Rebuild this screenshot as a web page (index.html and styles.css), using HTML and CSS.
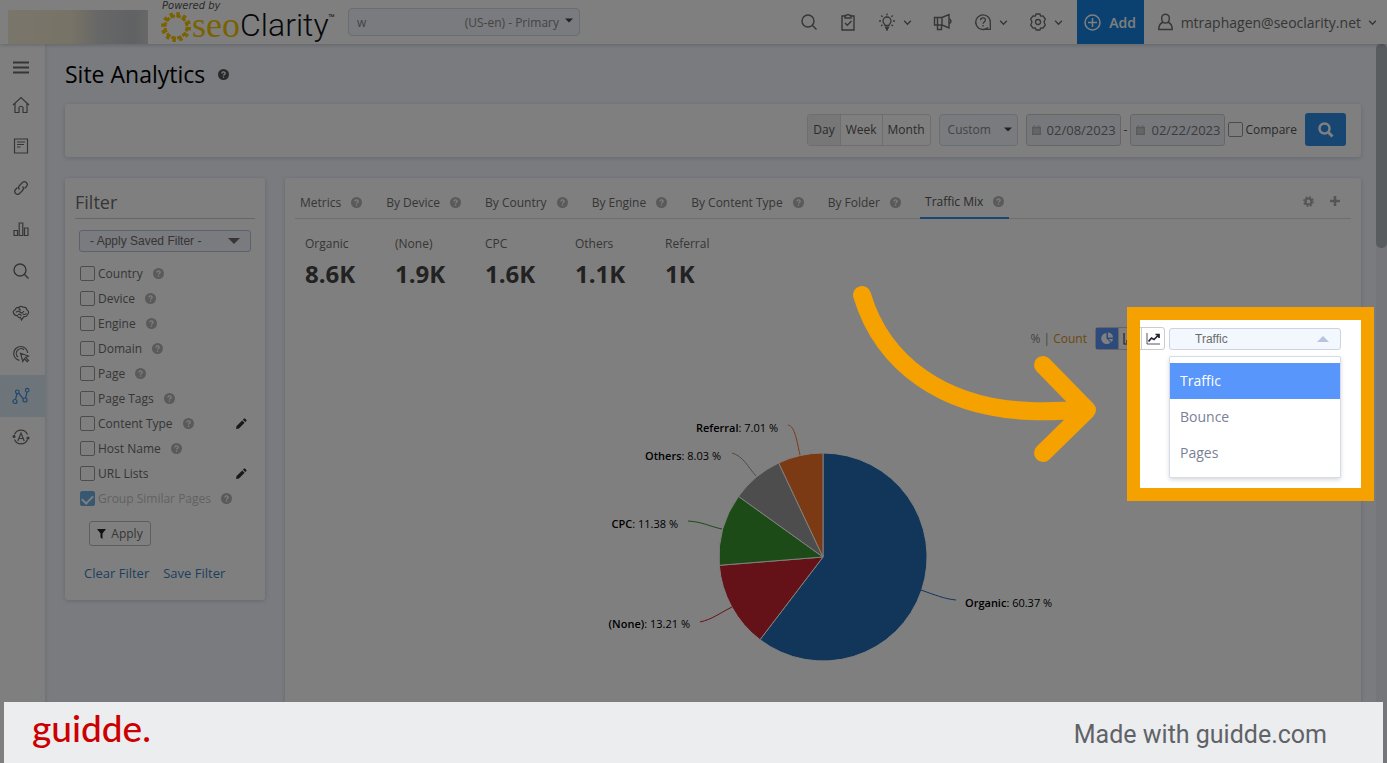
FILE: index.html
```html
<!DOCTYPE html>
<html lang="en">
<head>
  <meta charset="UTF-8" />
  <meta name="viewport" content="width=device-width, initial-scale=1.0" />
  <title>Site Analytics</title>
  <link rel="stylesheet" href="styles.css">
</head>
<body>
  <svg class="sprite" aria-hidden="true">
    <symbol id="help" viewBox="0 0 12 12">
      <circle cx="6" cy="6" r="6" fill="currentColor"/>
      <path d="M4.2 4.8C4.2 2.6 7.8 2.6 7.8 4.7C7.8 6 6 5.9 6 7.2M6 8.3V9.5" fill="none" stroke="#fff" stroke-width="1.4"/>
    </symbol>
    <symbol id="chev" viewBox="0 0 8 8"><path d="M1 2.5L4 5.5L7 2.5" fill="none" stroke="currentColor" stroke-width="1.2"/></symbol>
    <symbol id="caret" viewBox="0 0 12 6"><path d="M0 0H12L6 6Z" fill="currentColor"/></symbol>
    <symbol id="search" viewBox="0 0 18 18"><g fill="none" stroke="currentColor" stroke-width="1.4"><circle cx="8" cy="8" r="6"/><path d="M12.5 12.5L16.5 16.5"/></g></symbol>
    <symbol id="pencil" viewBox="0 0 12 12"><path d="M1 11L1.6 8L7.2 2.4L9.6 4.8L4 10.4ZM7.9 1.7L9 .6Q9.5.2 10 .6L11.4 2Q11.8 2.5 11.4 3L10.3 4.1Z" fill="currentColor"/></symbol>
    <symbol id="cal" viewBox="0 0 10 11"><path d="M0 2H2V0H3V2H7V0H8V2H10V11H0Z" fill="currentColor"/><path d="M1 4.5H9M1 6.5H9M1 8.5H9M3.5 4V10M6.5 4V10" stroke="#eef1f9" stroke-width=".5"/></symbol>
  </svg>

  <header class="topbar">
    <div class="client"></div>
    <a class="logo" href="#" aria-label="seoClarity">
      <span class="powered">Powered by</span>
      <span class="wordmark">
        <svg width="32" height="32" viewBox="0 0 32 32"><g fill="none" stroke="#f5c400"><circle cx="16" cy="16" r="11" stroke-dasharray="4.500 1.260" stroke-width="3"/><circle cx="16" cy="16" r="13.500" stroke-dasharray="3.500 3.570" stroke-width="3"/></g></svg>
        <span class="seo">seo</span><span class="clarity">Clarity</span><small>™</small>
      </span>
    </a>
    <div class="profile-select">
      <span>w</span>
      <select aria-label="Profile"><option>(US-en) - Primary</option></select>
      <svg width="8" height="5"><use href="#caret"/></svg>
    </div>
    <nav class="tools">
      <button aria-label="Search"><svg width="18" height="18"><use href="#search"/></svg></button>
      <button aria-label="Tasks"><svg width="18" height="18" viewBox="0 0 18 18"><g fill="none" stroke="currentColor" stroke-width="1.4"><path d="M6 3H3V17H15V3H12M6 5V2.5H7.5Q9 .2 10.5 2.5H12V5ZM6 10L8.3 12.3L12.5 8"/></g></svg></button>
      <button aria-label="Ideas"><svg width="18" height="18" viewBox="0 0 18 18"><g fill="none" stroke="currentColor" stroke-width="1.3"><path d="M7 12.5C7 11 5 10.500 5 8A4 4 0 0 1 13 8C13 10.500 11 11 11 12.500ZM9 .5V2.500M1 8H3M15 8H17M3.200 2.500L4.600 3.900M14.800 2.500L13.400 3.900M3 13L4.500 11.800M15 13L13.500 11.800"/><path d="M7 14.500H11M8 16.500H10" stroke-width="2"/></g></svg><svg class="chev"><use href="#chev"/></svg></button>
      <button aria-label="News"><svg width="20" height="18" viewBox="0 0 20 18"><path d="M1.500 4.500H9L16 1.500V15L9 12H1.500ZM9 4.500V12M4.500 12V16.500H8.500V12M16 5.500Q20 8.200 16 11M4.500 4.500V12" fill="none" stroke="currentColor" stroke-width="1.400"/></svg></button>
      <button aria-label="Help"><svg width="18" height="18" viewBox="0 0 18 18"><g fill="none" stroke="currentColor" stroke-width="1.300"><path d="M14 14.500A7.300 7.300 0 1 1 16.300 9V16.300H9"/><path d="M6.600 7.300C6.600 4 11.400 4 11.400 7C11.400 9 9 8.800 9 10.800M9 12V13.500"/></g></svg><svg class="chev"><use href="#chev"/></svg></button>
      <button aria-label="Settings"><svg width="18" height="18" viewBox="0 0 18 18"><g fill="none" stroke="currentColor" stroke-width="1.300" stroke-linejoin="round"><path d="M7 1H11L11.600 3.200L14 2.900L16.300 6L15 9L16.300 12L14 15.100L11.600 14.800L11 17H7L6.400 14.800L4 15.100L1.700 12L3 9L1.700 6L4 2.900L6.400 3.200Z"/><circle cx="9" cy="9" r="2.500"/></g></svg><svg class="chev"><use href="#chev"/></svg></button>
    </nav>
    <button class="add"><svg width="17" height="17" viewBox="0 0 17 17"><g fill="none" stroke="#fff" stroke-width="1.500"><circle cx="8.500" cy="8.500" r="7.500"/><path d="M8.500 4V13M4 8.500H13"/></g></svg>Add</button>
    <button class="user"><svg width="17" height="18" viewBox="0 0 17 18"><path d="M8.500 1.200C5.500 1.200 4.500 3.500 4.700 5.700C4.800 8 6.300 10 8.500 10S12.200 8 12.300 5.700C12.500 3.500 11.500 1.200 8.500 1.200ZM5.500 9.500C3 10.500 1.800 12 1.800 16.500H15.200C15.200 12 14 10.500 11.500 9.500" fill="none" stroke="currentColor" stroke-width="1.400"/></svg>mtraphagen@seoclarity.net<svg class="chev"><use href="#chev"/></svg></button>
  </header>

  <div class="layout">
    <nav class="sidebar">
      <button class="menu" aria-label="Menu"><svg width="16" height="13" viewBox="0 0 16 13"><path d="M0 1.500H16M0 6.500H16M0 11.500H16" stroke="currentColor" stroke-width="2"/></svg></button>
      <ul>
        <li><a href="#" aria-label="Home"><svg viewBox="0 0 18 18"><path d="M1 9L9 1.500L17 9M3 7.500V16.500H7V11.500Q9 9 11 11.500V16.500H15V7.500"/></svg></a></li>
        <li><a href="#" aria-label="Reports"><svg viewBox="0 0 18 18"><path d="M2.500 2H15.500V16H2.500ZM5 5H13M5 7.500H12M5 10H8.500"/></svg></a></li>
        <li><a href="#" aria-label="Links"><svg viewBox="0 0 18 18"><path d="M7.500 10.500C6 9 6.500 7.500 7.500 6.500L10.500 3.500C13 1 17 4.500 14.500 7.500L12.500 9.500M10.500 7.500C12 9 11.500 10.500 10.500 11.500L7.500 14.500C5 17 1 13.500 3.500 10.500L5.500 8.500"/></svg></a></li>
        <li><a href="#" aria-label="Rankings"><svg viewBox="0 0 18 18"><path d="M2 10.500H5.500V15.500H2ZM7.200 3H10.800V15.500H7.200ZM12.500 8H16V15.500H12.500Z"/></svg></a></li>
        <li><a href="#" aria-label="Research"><svg><use href="#search"/></svg></a></li>
        <li><a href="#" aria-label="Insights"><svg viewBox="0 0 18 18"><path d="M1.500 9Q.500 7 3 6Q4 3 7 3.500Q9 1.500 11 3.200Q14.500 3 15 6Q18 8 15.500 10.500Q15 13 12 12.500L9.500 16L8.500 13.500Q6 14 5.500 11.500Q2.500 12 1.500 9ZM4 8.500Q6 6 8 8T12 7M7 4Q7 6 9 6M10.500 9.500Q12 11.500 14.500 9.500M6 10.500Q8 9.500 9.500 12"/></svg></a></li>
        <li><a href="#" aria-label="Clicks"><svg viewBox="0 0 18 18"><path d="M7.500 15.400A7 7 0 1 1 15.700 8M12 4.800A4.500 4.500 0 1 0 6 12M8.500 8.200L16.500 11L13.500 12.500L16.500 15.500L15.200 16.700L12.300 13.800L10.800 16.500Z"/></svg></a></li>
        <li class="active"><a href="#" aria-label="Site Analytics"><svg viewBox="0 0 18 18"><path d="M3.500 12.500L5 6.500M6.500 6L11.500 12M13.500 11.500L15 5"/><circle cx="3" cy="14.500" r="2"/><circle cx="5.300" cy="4.800" r="1.800"/><circle cx="13" cy="13" r="2"/><circle cx="15.200" cy="3.200" r="1.800"/></svg></a></li>
        <li><a href="#" aria-label="Automation"><svg viewBox="0 0 18 18"><path d="M2.500 6.500A7 7 0 0 1 15.500 6.500M15.500 11.500A7 7 0 0 1 2.500 11.500M5.800 13L9 5L12.200 13M7 10.500H11"/><circle cx="2" cy="8.500" r="1" fill="currentColor"/><circle cx="16" cy="10" r="1" fill="currentColor"/></svg></a></li>
      </ul>
    </nav>

    <main>
      <h1>Site Analytics <svg class="help dark"><use href="#help"/></svg></h1>

      <section class="card toolbar">
        <div class="period">
          <button class="on">Day</button><button>Week</button><button>Month</button>
        </div>
        <div class="range-select">
          <select aria-label="Date range"><option>Custom</option></select>
          <svg width="8" height="5"><use href="#caret"/></svg>
        </div>
        <div class="dates">
          <label class="date"><svg width="9" height="10"><use href="#cal"/></svg><input type="text" value="02/08/2023" aria-label="Start date"></label>
          <span>-</span>
          <label class="date"><svg width="9" height="10"><use href="#cal"/></svg><input type="text" value="02/22/2023" aria-label="End date"></label>
          <label class="compare"><input type="checkbox">Compare</label>
        </div>
        <button class="go" aria-label="Search"><svg width="16" height="16" viewBox="0 0 16 16"><g fill="none" stroke="#fff" stroke-width="2.500"><circle cx="6.500" cy="6.500" r="5"/><path d="M10 10L14.500 14.500" stroke-width="3"/></g></svg></button>
      </section>

      <div class="columns">
        <aside class="card filter">
          <h2>Filter</h2>
          <div class="saved">
            <select aria-label="Saved filter"><option>- Apply Saved Filter -</option></select>
            <svg width="12" height="6"><use href="#caret"/></svg>
          </div>
          <ul>
            <li><label><input type="checkbox">Country</label><svg class="help"><use href="#help"/></svg></li>
            <li><label><input type="checkbox">Device</label><svg class="help"><use href="#help"/></svg></li>
            <li><label><input type="checkbox">Engine</label><svg class="help"><use href="#help"/></svg></li>
            <li><label><input type="checkbox">Domain</label><svg class="help"><use href="#help"/></svg></li>
            <li><label><input type="checkbox">Page</label><svg class="help"><use href="#help"/></svg></li>
            <li><label><input type="checkbox">Page Tags</label><svg class="help"><use href="#help"/></svg></li>
            <li><label><input type="checkbox">Content Type</label><svg class="help"><use href="#help"/></svg><button class="edit" aria-label="Edit content type"><svg width="12" height="12"><use href="#pencil"/></svg></button></li>
            <li><label><input type="checkbox">Host Name</label><svg class="help"><use href="#help"/></svg></li>
            <li><label><input type="checkbox">URL Lists</label><button class="edit" aria-label="Edit URL lists"><svg width="12" height="12"><use href="#pencil"/></svg></button></li>
            <li class="disabled"><label><input type="checkbox" checked disabled>Group Similar Pages</label><svg class="help"><use href="#help"/></svg></li>
          </ul>
          <button class="apply"><svg width="9" height="10" viewBox="0 0 9 10"><path d="M0 0H9L5.500 4.500V10L3.500 8.500V4.500Z" fill="#222"/></svg>Apply</button>
          <div class="links"><a href="#">Clear Filter</a><a href="#">Save Filter</a></div>
        </aside>

        <section class="card report">
          <nav class="tabs">
            <a href="#">Metrics<svg class="help"><use href="#help"/></svg></a>
            <a href="#">By Device<svg class="help"><use href="#help"/></svg></a>
            <a href="#">By Country<svg class="help"><use href="#help"/></svg></a>
            <a href="#">By Engine<svg class="help"><use href="#help"/></svg></a>
            <a href="#">By Content Type<svg class="help"><use href="#help"/></svg></a>
            <a href="#">By Folder<svg class="help"><use href="#help"/></svg></a>
            <a href="#" class="active">Traffic Mix<svg class="help"><use href="#help"/></svg></a>
            <span class="tab-actions">
              <button aria-label="Tab settings"><svg width="11" height="11" viewBox="0 0 11 11"><g fill="none" stroke="currentColor"><circle cx="5.500" cy="5.500" r="3" stroke-width="2.200"/><circle cx="5.500" cy="5.500" r="4.700" stroke-width="1.400" stroke-dasharray="2 1.690"/></g></svg></button>
              <button aria-label="Add tab"><svg width="10" height="10" viewBox="0 0 10 10"><path d="M5 0V10M0 5H10" stroke="currentColor" stroke-width="2.600"/></svg></button>
            </span>
          </nav>

          <dl class="kpis">
            <div><dt>Organic</dt><dd>8.6K</dd></div>
            <div><dt>(None)</dt><dd>1.9K</dd></div>
            <div><dt>CPC</dt><dd>1.6K</dd></div>
            <div><dt>Others</dt><dd>1.1K</dd></div>
            <div><dt>Referral</dt><dd>1K</dd></div>
          </dl>

          <div class="chart-controls">
            <span class="units">% | <a href="#">Count</a></span>
            <div class="chart-type">
              <button class="on" aria-label="Pie"><svg width="14" height="13" viewBox="0 0 14 13"><path d="M6.500 6.500V1A5.500 5.500 0 1 0 10.500 10.500Z" fill="#fff"/><path d="M8 5.500V.500A5 5 0 0 1 13 5.500ZM8.500 7H13A5 5 0 0 1 11.500 10Z" fill="#fff"/></svg></button>
              <button aria-label="Bar"><svg width="14" height="12" viewBox="0 0 14 12"><path d="M1 0V11H14M4 10V7M7 10V3M10 10V5" fill="none" stroke="#445" stroke-width="1.200"/></svg></button>
              <button aria-label="Trend"><svg width="14" height="12" viewBox="0 0 14 12"><path d="M1 0V11H14" fill="none" stroke="#556" /><path d="M2.500 8.500L5.500 5L8 6.500L12.500 2M9.500 1.500H13V5" fill="none" stroke="#223" stroke-width="1.700"/></svg></button>
            </div>
            <div class="metric">
              <select aria-label="Metric"><option>Traffic</option></select>
              <svg width="12" height="6" viewBox="0 0 12 6"><path d="M0 6H12L6 0Z" fill="#b9c3de"/></svg>
              <ul role="listbox" aria-label="Metric options">
                <li role="option" aria-selected="true">Traffic</li>
                <li role="option">Bounce</li>
                <li role="option">Pages</li>
              </ul>
              <div class="spotlight"></div>
              <svg class="arrow" width="260" height="190" viewBox="0 0 260 190"><path d="M22 15C43 85 105 128 190 131Q215 132 245 129M203 85L247 130L203 173" fill="none" stroke="#f5a100" stroke-width="18" stroke-linecap="round" stroke-linejoin="round"/></svg>
            </div>
          </div>

          <svg class="pie" width="480" height="280" viewBox="0 0 480 280" role="img" aria-label="Traffic mix">
            <g stroke="#fff" stroke-width="1">
              <path d="M240 140V36A104 104 0 1 1 177.000 222.700Z" fill="#246cb4"/>
              <path d="M240 140L177 222.700A104 104 0 0 1 136.300 148.300Z" fill="#c8242e"/>
              <path d="M240 140L136.300 148.300A104 104 0 0 1 155.500 79.400Z" fill="#38962e"/>
              <path d="M240 140L155.500 79.400A104 104 0 0 1 195.700 45.900Z" fill="#9a9a9a"/>
              <path d="M240 140L195.700 45.900A104 104 0 0 1 240 36Z" fill="#f87428"/>
            </g>
            <g fill="none">
              <path d="M338 173C352 178 362 182 373 183" stroke="#246cb4"/>
              <path d="M149 190C135 197 130 202 117 205" stroke="#c8242e"/>
              <path d="M139 112C125 109 120 105 105 104" stroke="#38962e"/>
              <path d="M173 59C165 50 160 39 149 36" stroke="#9a9a9a"/>
              <path d="M217 38C214 25 212 9 205 8" stroke="#f87428"/>
            </g>
            <g class="pie-labels">
              <text x="382" y="190"><tspan>Organic</tspan>: 60.37 %</text>
              <text x="107" y="211" text-anchor="end"><tspan>(None)</tspan>: 13.21 %</text>
              <text x="95" y="111" text-anchor="end"><tspan>CPC</tspan>: 11.38 %</text>
              <text x="138" y="43" text-anchor="end"><tspan>Others</tspan>: 8.03 %</text>
              <text x="195" y="15" text-anchor="end"><tspan>Referral</tspan>: 7.01 %</text>
            </g>
          </svg>
        </section>
      </div>
    </main>
    <div class="scrollbar"><div></div></div>
  </div>

  <footer>
    <strong>guidde.</strong>
    <span>Made with guidde.com</span>
  </footer>
</body>
</html>
```

FILE: styles.css
```css
:root {
  --bg: #f3f6fe;
  --text: #6c6c6c;
  --muted: #c4c4c4;
  --line: #ddd;
  --field: #f3f6fd;
  --field-border: #d3dae8;
  --blue: #2f8de4;
  --orange: #f5a100;
}

* {
  box-sizing: border-box;
}

body {
  margin: 0;
  height: 100vh;
  display: flex;
  flex-direction: column;
  overflow: hidden;
  font-family: "Open Sans", "Noto Sans", sans-serif;
  font-size: 12px;
  color: var(--text);
  background: var(--bg);
}

button,
select,
input {
  font: inherit;
  color: inherit;
}

button {
  padding: 0;
  border: 0;
  background: none;
  display: flex;
  align-items: center;
  justify-content: center;
}

select {
  appearance: none;
  border: 0;
  padding: 0;
  background: none;
  flex: 1;
  min-width: 0;
}

a {
  color: inherit;
  text-decoration: none;
}

ul,
dl,
dd {
  list-style: none;
  margin: 0;
  padding: 0;
}

svg {
  flex: none;
}

.sprite {
  position: absolute;
  width: 0;
  height: 0;
}

.help {
  width: 11px;
  height: 11px;
  color: #b4b4b4;
}

.dark {
  color: #555;
}

.chev {
  width: 9px;
  height: 9px;
}

/* top bar */
.topbar {
  display: flex;
  align-items: center;
  height: 44px;
  flex: none;
  background: #fff;
  box-shadow: 0 1px 4px rgba(0, 0, 0, 0.2);
  position: relative;
}

.client {
  width: 140px;
  height: 34px;
  margin: 9px 12px 0 8px;
  background: linear-gradient(90deg, #f3ecd8, #efe6cc 45%, #cfcfcf 65%, #c2c4c8 90%, #d0d0d0);
}

.logo {
  width: 176px;
  height: 44px;
  color: #111;
}

.powered {
  display: block;
  height: 11px;
  padding-left: 2px;
  font: italic 10px/11px "DejaVu Sans", sans-serif;
  color: #555;
}

.wordmark {
  display: flex;
  height: 32px;
}

.seo {
  font: 36px/28px "Liberation Serif", serif;
  color: #f5c400;
}

.clarity {
  font: 300 32px/28px Roboto, sans-serif;
}

.wordmark small {
  font-size: 8px;
}

.profile-select {
  display: flex;
  align-items: center;
  width: 232px;
  height: 28px;
  margin-left: 12px;
  padding: 0 6px 0 8px;
  border: 1px solid var(--field-border);
  border-radius: 4px;
  background: var(--field);
  color: #888;
}

.profile-select select {
  text-align-last: right;
  padding-right: 6px;
}

.profile-select svg {
  color: #444;
  margin-bottom: 4px;
}

.tools {
  display: flex;
  gap: 21px;
  margin-left: auto;
  margin-right: 14px;
}

.tools button {
  gap: 7px;
}

.add {
  width: 67px;
  height: 44px;
  gap: 8px;
  background: #1583e2;
  color: #fff;
  font-size: 14px;
  font-weight: 600;
}

.user {
  gap: 7px;
  margin: 0 10px 0 13px;
  font-size: 14px;
}

/* page frame */
.layout {
  display: flex;
  flex: 1;
}

.sidebar {
  width: 45px;
  flex: none;
  background: #fff;
  color: #6c6c6c;
  box-shadow: 1px 0 3px rgba(0, 0, 0, 0.1);
}

.menu {
  width: 42px;
  height: 40px;
  padding-top: 6px;
}

.sidebar ul {
  display: flex;
  flex-direction: column;
  height: 374px;
}

.sidebar li {
  flex: 1;
  display: flex;
  padding-left: 12px;
}

.sidebar li a {
  display: flex;
  align-items: center;
}

.sidebar li svg {
  width: 18px;
  height: 18px;
  fill: none;
  stroke: currentColor;
  stroke-width: 1.2;
}

.sidebar .active {
  background: #dcebf5;
  color: #3f8fdc;
}

main {
  flex: 1;
  min-width: 0;
  display: flex;
  flex-direction: column;
  padding: 0 15px 0 20px;
}

h1 {
  display: flex;
  align-items: center;
  gap: 13px;
  height: 60px;
  margin: 0;
  font-size: 23px;
  font-weight: 500;
  color: #000;
}

.card {
  background: #fff;
  border-radius: 3px;
  box-shadow: 0 1px 4px rgba(40, 60, 100, 0.2);
}

.scrollbar {
  width: 11px;
  background: #e9ecf2;
}

.scrollbar div {
  height: 204px;
  border-radius: 5px;
  background: #b2b9be;
}

/* date toolbar */
.toolbar {
  display: flex;
  align-items: center;
  justify-content: flex-end;
  gap: 8px;
  height: 53px;
  padding: 0 15px 2px;
  color: #555;
}

.period {
  display: flex;
  height: 32px;
  border: 1px solid var(--line);
  border-radius: 3px;
}

.period button {
  padding: 0 5px;
}

.period button + button {
  border-left: 1px solid var(--line);
}

.period .on {
  background: #eee;
}

.range-select {
  display: flex;
  align-items: center;
  width: 79px;
  height: 32px;
  padding: 0 5px 0 8px;
  border: 1px solid var(--field-border);
  border-radius: 4px;
  background: var(--field);
  color: #888;
}

.range-select svg {
  color: #444;
}

.dates {
  display: flex;
  align-items: center;
  gap: 3px;
}

.date {
  display: flex;
  align-items: center;
  gap: 6px;
  width: 95px;
  height: 32px;
  padding-left: 5px;
  border: 1px solid #ccc;
  border-radius: 3px;
  background: #eef1f9;
  color: #b4b4b4;
}

.date input {
  width: 72px;
  padding: 0;
  border: 0;
  background: none;
  font-size: 13px;
  color: #777;
}

.compare {
  display: flex;
  align-items: center;
  gap: 2px;
}

input[type="checkbox"] {
  appearance: none;
  width: 15px;
  height: 15px;
  margin: 0;
  border: 1px solid #999;
  border-radius: 2px;
  background: #fff;
}

.go {
  width: 41px;
  height: 33px;
  border-radius: 3px;
  background: var(--blue);
}

/* filter and report */
.columns {
  display: flex;
  flex: 1;
  gap: 20px;
  margin-top: 21px;
}

.filter {
  width: 200px;
  height: 422px;
  flex: none;
  padding: 10px;
}

h2 {
  height: 31px;
  margin: 0 0 11px;
  border-bottom: 1px solid #ccc;
  font-size: 18px;
  line-height: 29px;
  font-weight: 400;
}

.saved {
  display: flex;
  align-items: center;
  height: 22px;
  margin: 0 4px 9px;
  padding: 0 10px;
  border: 1px solid #b7c4dc;
  border-radius: 3px;
  background: var(--field);
  font-family: "Liberation Sans", sans-serif;
}

.filter li {
  display: flex;
  align-items: center;
  gap: 10px;
  height: 25px;
  padding: 0 8px 0 5px;
}

.filter label {
  display: flex;
  align-items: center;
  gap: 3px;
}

.edit {
  margin-left: auto;
  color: #333;
}

.filter .disabled {
  color: var(--muted);
}

.filter input:checked {
  border-color: #70aee2;
  background: #70aee2;
  display: grid;
  place-items: center;
}

.filter input:checked::after {
  content: "";
  width: 9px;
  height: 5px;
  border-left: 2px solid #fff;
  border-bottom: 2px solid #fff;
  transform: rotate(-45deg);
}

.apply {
  gap: 5px;
  width: 62px;
  height: 25px;
  margin: 10px 0 0 14px;
  border: 1px solid #bbb;
  border-radius: 3px;
}

.links {
  display: flex;
  gap: 14px;
  padding: 18px 9px;
  font-size: 13px;
  color: #3b7fb9;
}

.report {
  flex: 1;
  min-width: 0;
  padding: 0 10px;
}

.tabs {
  display: flex;
  gap: 14px;
  height: 41px;
  border-bottom: 1px solid var(--line);
}

.tabs a {
  display: flex;
  align-items: center;
  gap: 10px;
  height: 41px;
  padding: 7px 5px 0;
}

.tabs .active {
  border-bottom: 2px solid #2f8de4;
  color: #555;
}

.tab-actions {
  display: flex;
  gap: 16px;
  margin-left: auto;
  padding: 6px 11px 0 0;
  color: #aaa;
}

.kpis {
  display: flex;
  padding: 16px 10px 0;
}

.kpis div {
  width: 90px;
}

.kpis dt {
  line-height: 18px;
}

.kpis dd {
  font-size: 24px;
  line-height: 42px;
  font-weight: 700;
  color: #444;
}

.chart-controls {
  display: flex;
  justify-content: flex-end;
  align-items: center;
  margin-top: 32px;
  padding-right: 10px;
}

.units {
  margin-right: 8px;
  color: #888;
}

.units a {
  color: #d9921a;
  font-weight: 500;
}

.chart-type {
  display: flex;
  height: 23px;
  margin-right: 4px;
  border: 1px solid #ccc;
  border-radius: 3px;
}

.chart-type button {
  width: 22px;
}

.chart-type button + button {
  width: 23px;
  border-left: 1px solid #ccc;
}

.chart-type .on {
  background: #5896f8;
}

.metric {
  position: relative;
  display: flex;
  align-items: center;
  width: 172px;
  height: 22px;
  padding: 0 11px 0 25px;
  border: 1px solid #ccd3e4;
  border-radius: 3px;
  background: #f3f7fe;
  font-family: "Liberation Sans", sans-serif;
}

.metric ul {
  position: absolute;
  top: 27px;
  left: -1px;
  width: 172px;
  padding: 6px 0;
  border: 1px solid #d5dbe9;
  border-radius: 2px;
  background: #fff;
  box-shadow: 0 2px 4px rgba(0, 0, 0, 0.15);
  font-family: "Open Sans", sans-serif;
  font-size: 14px;
  line-height: 36px;
  color: #7a8196;
}

.metric li {
  padding-left: 10px;
}

.metric li[aria-selected] {
  background: #5896fb;
  color: #fff;
}

/* dims the page around the highlighted control */
.spotlight {
  position: absolute;
  z-index: 10;
  top: -22px;
  right: -34px;
  width: 247px;
  height: 194px;
  border: 13px solid var(--orange);
  box-shadow: 0 0 0 2000px rgba(0, 0, 0, 0.5);
}

.metric .arrow {
  position: absolute;
  z-index: 11;
  top: -49px;
  right: 240px;
}

.pie {
  display: block;
  margin: 67px auto 0;
}

.pie-labels {
  font-size: 11px;
  fill: #000;
}

.pie-labels tspan {
  font-weight: 600;
}

/* branding strip */
footer {
  position: fixed;
  z-index: 20;
  left: 4px;
  right: 4px;
  bottom: 0;
  display: flex;
  align-items: center;
  justify-content: space-between;
  height: 61px;
  padding: 4px 56px 0 28px;
  background: #ecedef;
  font: 25px Roboto, sans-serif;
  color: #5f6368;
}

footer strong {
  padding-bottom: 14px;
  font: 500 37px Lato, sans-serif;
  color: #c00;
}
```
